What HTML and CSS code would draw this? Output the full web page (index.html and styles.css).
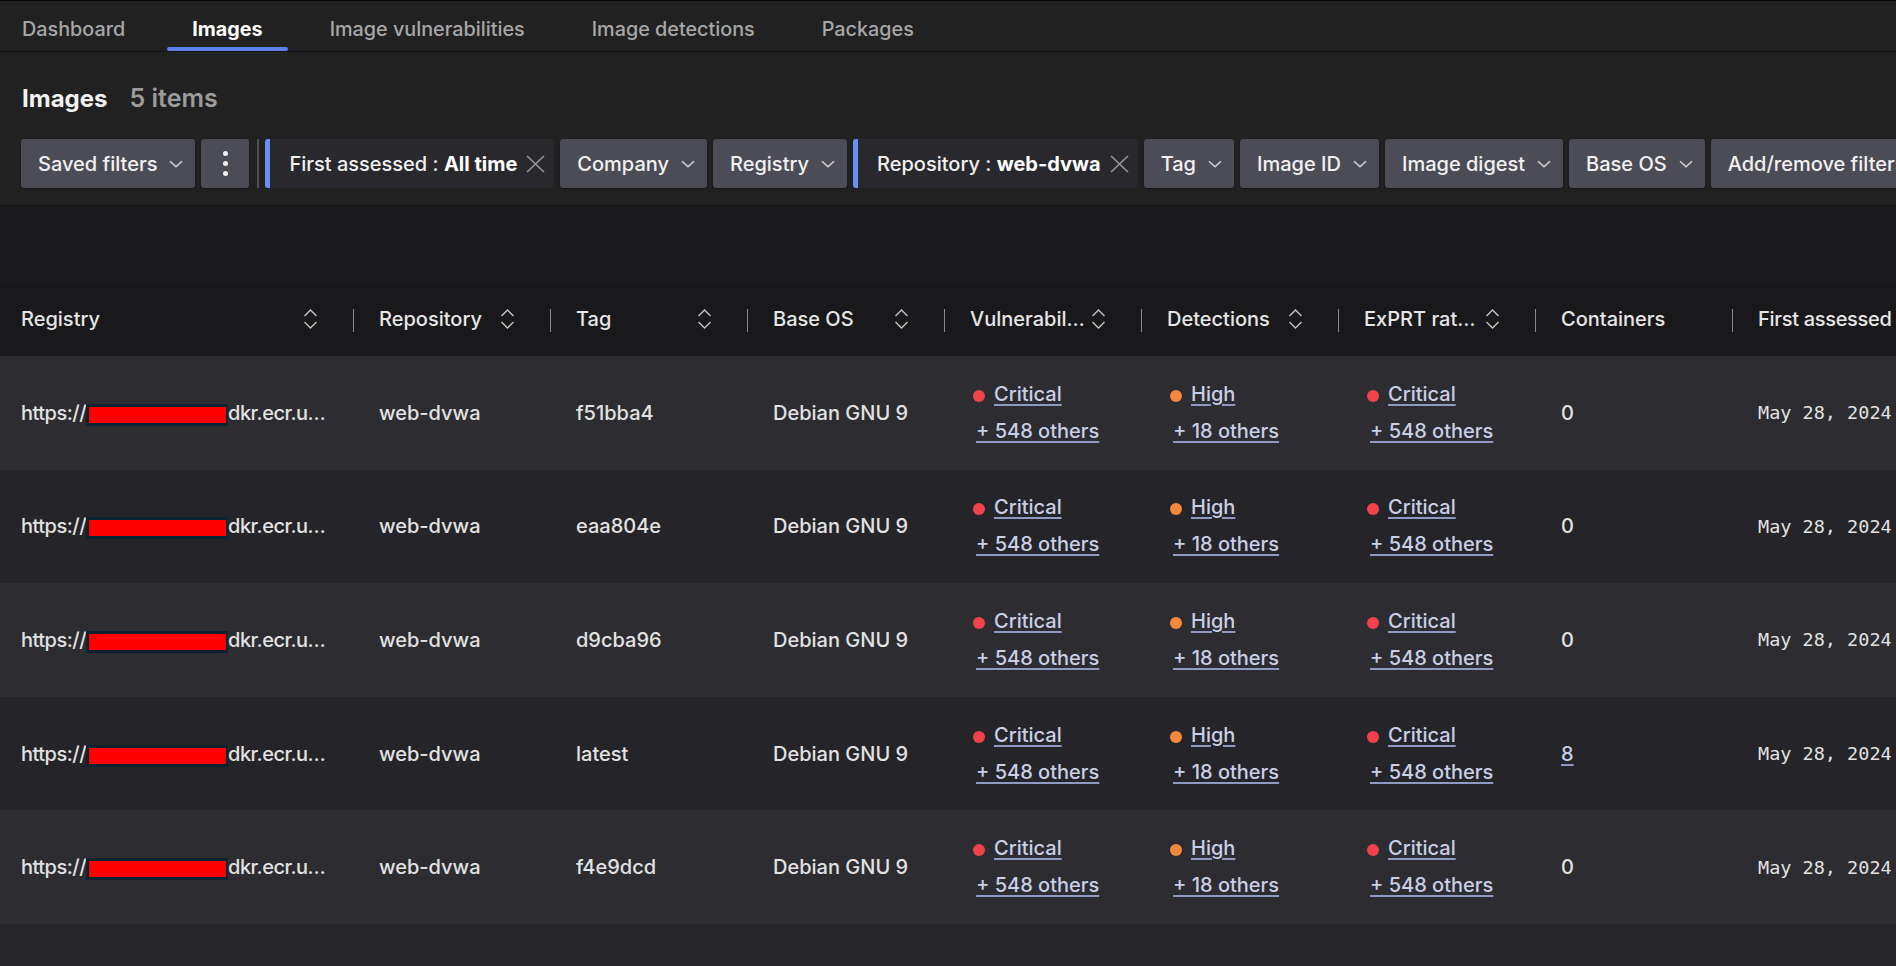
FILE: index.html
```html
<!DOCTYPE html>
<html lang="en">
<head>
<meta charset="utf-8">
<title>Images</title>
<link rel="stylesheet" href="styles.css">
</head>
<body>
<div class="app">
  <nav class="tabs">
    <span class="tab first">Dashboard</span>
    <span class="tab active">Images</span>
    <span class="tab">Image vulnerabilities</span>
    <span class="tab">Image detections</span>
    <span class="tab">Packages</span>
  </nav>

  <header class="page-head">
    <h1 class="title">Images</h1>
    <span class="count">5 items</span>
  </header>

  <div class="filters">
    <button class="btn">Saved filters <svg class="chev" viewBox="0 0 14 8"><path d="M1 1.2 L7 6.8 L13 1.2"/></svg></button>
    <button class="btn kebab"><span></span><span></span><span></span></button>
    <span class="vsep"></span>
    <div class="chip">First assessed :&nbsp; <b>All time</b><svg class="close" viewBox="0 0 19 18"><path d="M1 1 L18 17 M18 1 L1 17"/></svg></div>
    <button class="btn">Company <svg class="chev" viewBox="0 0 14 8"><path d="M1 1.2 L7 6.8 L13 1.2"/></svg></button>
    <button class="btn">Registry <svg class="chev" viewBox="0 0 14 8"><path d="M1 1.2 L7 6.8 L13 1.2"/></svg></button>
    <div class="chip">Repository :&nbsp; <b>web-dvwa</b><svg class="close" viewBox="0 0 19 18"><path d="M1 1 L18 17 M18 1 L1 17"/></svg></div>
    <button class="btn">Tag <svg class="chev" viewBox="0 0 14 8"><path d="M1 1.2 L7 6.8 L13 1.2"/></svg></button>
    <button class="btn">Image ID <svg class="chev" viewBox="0 0 14 8"><path d="M1 1.2 L7 6.8 L13 1.2"/></svg></button>
    <button class="btn">Image digest <svg class="chev" viewBox="0 0 14 8"><path d="M1 1.2 L7 6.8 L13 1.2"/></svg></button>
    <button class="btn">Base OS <svg class="chev" viewBox="0 0 14 8"><path d="M1 1.2 L7 6.8 L13 1.2"/></svg></button>
    <button class="btn">Add/remove filters</button>
  </div>

  <div class="band"></div>

  <div class="table">
    <div class="row head">
      <div class="cell c1"><span class="label">Registry</span><svg class="sort" viewBox="0 0 15 22"><path d="M1.5 8 L7.5 2 L13.5 8 M1.5 14 L7.5 20 L13.5 14"/></svg></div>
      <div class="cell"><span class="label">Repository</span><svg class="sort" viewBox="0 0 15 22"><path d="M1.5 8 L7.5 2 L13.5 8 M1.5 14 L7.5 20 L13.5 14"/></svg></div>
      <div class="cell"><span class="label">Tag</span><svg class="sort" viewBox="0 0 15 22"><path d="M1.5 8 L7.5 2 L13.5 8 M1.5 14 L7.5 20 L13.5 14"/></svg></div>
      <div class="cell"><span class="label">Base OS</span><svg class="sort" viewBox="0 0 15 22"><path d="M1.5 8 L7.5 2 L13.5 8 M1.5 14 L7.5 20 L13.5 14"/></svg></div>
      <div class="cell"><span class="label">Vulnerabilities</span><svg class="sort" viewBox="0 0 15 22"><path d="M1.5 8 L7.5 2 L13.5 8 M1.5 14 L7.5 20 L13.5 14"/></svg></div>
      <div class="cell"><span class="label">Detections</span><svg class="sort" viewBox="0 0 15 22"><path d="M1.5 8 L7.5 2 L13.5 8 M1.5 14 L7.5 20 L13.5 14"/></svg></div>
      <div class="cell"><span class="label">ExPRT rating</span><svg class="sort" viewBox="0 0 15 22"><path d="M1.5 8 L7.5 2 L13.5 8 M1.5 14 L7.5 20 L13.5 14"/></svg></div>
      <div class="cell"><span class="label">Containers</span></div>
      <div class="cell last"><span class="label">First assessed</span></div>
    </div>

    <div class="row odd">
      <div class="cell c1 url">https://<span class="redact"></span>dkr.ecr.u…</div>
      <div class="cell">web-dvwa</div>
      <div class="cell">f51bba4</div>
      <div class="cell">Debian GNU 9</div>
      <div class="cell sev"><div><i class="dot red"></i><a class="link">Critical</a></div><div><a class="link">+ 548 others</a></div></div>
      <div class="cell sev"><div><i class="dot orange"></i><a class="link">High</a></div><div><a class="link">+ 18 others</a></div></div>
      <div class="cell sev"><div><i class="dot red"></i><a class="link">Critical</a></div><div><a class="link">+ 548 others</a></div></div>
      <div class="cell num">0</div>
      <div class="cell last date">May 28, 2024</div>
    </div>

    <div class="row even">
      <div class="cell c1 url">https://<span class="redact"></span>dkr.ecr.u…</div>
      <div class="cell">web-dvwa</div>
      <div class="cell">eaa804e</div>
      <div class="cell">Debian GNU 9</div>
      <div class="cell sev"><div><i class="dot red"></i><a class="link">Critical</a></div><div><a class="link">+ 548 others</a></div></div>
      <div class="cell sev"><div><i class="dot orange"></i><a class="link">High</a></div><div><a class="link">+ 18 others</a></div></div>
      <div class="cell sev"><div><i class="dot red"></i><a class="link">Critical</a></div><div><a class="link">+ 548 others</a></div></div>
      <div class="cell num">0</div>
      <div class="cell last date">May 28, 2024</div>
    </div>

    <div class="row odd">
      <div class="cell c1 url">https://<span class="redact"></span>dkr.ecr.u…</div>
      <div class="cell">web-dvwa</div>
      <div class="cell">d9cba96</div>
      <div class="cell">Debian GNU 9</div>
      <div class="cell sev"><div><i class="dot red"></i><a class="link">Critical</a></div><div><a class="link">+ 548 others</a></div></div>
      <div class="cell sev"><div><i class="dot orange"></i><a class="link">High</a></div><div><a class="link">+ 18 others</a></div></div>
      <div class="cell sev"><div><i class="dot red"></i><a class="link">Critical</a></div><div><a class="link">+ 548 others</a></div></div>
      <div class="cell num">0</div>
      <div class="cell last date">May 28, 2024</div>
    </div>

    <div class="row even">
      <div class="cell c1 url">https://<span class="redact"></span>dkr.ecr.u…</div>
      <div class="cell">web-dvwa</div>
      <div class="cell">latest</div>
      <div class="cell">Debian GNU 9</div>
      <div class="cell sev"><div><i class="dot red"></i><a class="link">Critical</a></div><div><a class="link">+ 548 others</a></div></div>
      <div class="cell sev"><div><i class="dot orange"></i><a class="link">High</a></div><div><a class="link">+ 18 others</a></div></div>
      <div class="cell sev"><div><i class="dot red"></i><a class="link">Critical</a></div><div><a class="link">+ 548 others</a></div></div>
      <div class="cell num"><a class="link">8</a></div>
      <div class="cell last date">May 28, 2024</div>
    </div>

    <div class="row odd">
      <div class="cell c1 url">https://<span class="redact"></span>dkr.ecr.u…</div>
      <div class="cell">web-dvwa</div>
      <div class="cell">f4e9dcd</div>
      <div class="cell">Debian GNU 9</div>
      <div class="cell sev"><div><i class="dot red"></i><a class="link">Critical</a></div><div><a class="link">+ 548 others</a></div></div>
      <div class="cell sev"><div><i class="dot orange"></i><a class="link">High</a></div><div><a class="link">+ 18 others</a></div></div>
      <div class="cell sev"><div><i class="dot red"></i><a class="link">Critical</a></div><div><a class="link">+ 548 others</a></div></div>
      <div class="cell num">0</div>
      <div class="cell last date">May 28, 2024</div>
    </div>
  </div>
</div>
</body>
</html>
```

FILE: styles.css
```css
* { box-sizing: border-box; }

html, body {
  margin: 0;
  padding: 0;
  height: 966px;
  overflow: hidden;
}

body {
  background: #212121;
  color: #e2e2e2;
  font-family: Inter, "Noto Sans", "Liberation Sans", sans-serif;
  font-size: 20px;
}

.app {
  height: 966px;
  display: flex;
  flex-direction: column;
  border-top: 1px solid #050505;
}

/* Tabs */
.tabs {
  display: flex;
  height: 51px;
  padding-left: 22px;
  gap: 17px;
  border-bottom: 1px solid #131313;
  flex-shrink: 0;
}

.tab {
  position: relative;
  padding: 15px 25px 0;
  line-height: 26px;
  font-size: 19.8px;
  color: #a7a7a7;
  font-weight: 500;
  white-space: nowrap;
}

.tab.first { padding-left: 0; }

.tab.active {
  color: #ffffff;
  font-weight: 700;
}

.tab.active::after {
  content: "";
  position: absolute;
  left: 0;
  right: 0;
  bottom: 0;
  height: 4px;
  border-radius: 2px;
  background: #5c7fea;
}

/* Title */
.page-head {
  display: flex;
  align-items: baseline;
  gap: 22px;
  padding: 31px 22px 0;
  height: 61px;
  flex-shrink: 0;
}

.title {
  margin: 0;
  font-size: 24px;
  line-height: 30px;
  font-weight: 700;
  color: #f2f2f2;
}

.count {
  font-size: 25px;
  line-height: 30px;
  font-weight: 600;
  color: #9c9c9c;
}

/* Filters */
.filters {
  display: flex;
  align-items: stretch;
  gap: 6px;
  height: 93px;
  padding: 26px 0 17px 21px;
  border-bottom: 1px solid #131313;
  overflow: hidden;
  white-space: nowrap;
  flex-shrink: 0;
}

.btn {
  display: flex;
  align-items: center;
  gap: 12px;
  flex-shrink: 0;
  height: 49px;
  padding: 0 12px 0 17px;
  border: 0;
  border-radius: 3px;
  background: #4c4c56;
  color: #f1f1f1;
  font-family: inherit;
  font-size: 20px;
  font-weight: 500;
  box-shadow: 0 1px 2px rgba(0, 0, 0, 0.35);
}

.chev {
  width: 14px;
  height: 8px;
  fill: none;
  stroke: #d4d4d4;
  stroke-width: 1.5;
}

.kebab {
  width: 48px;
  padding: 0;
  flex-direction: column;
  justify-content: center;
  gap: 5px;
}

.kebab span {
  width: 5px;
  height: 5px;
  border-radius: 50%;
  background: #f0f0f0;
}

.vsep {
  width: 2px;
  margin-left: 2px;
  background: #4e4e52;
  flex-shrink: 0;
}

.chip {
  display: flex;
  align-items: center;
  flex-shrink: 0;
  height: 49px;
  padding: 0 9px 0 19px;
  border-left: 5px solid #6d8ff5;
  border-radius: 3px;
  background: #29292d;
  color: #f1f1f1;
  font-weight: 500;
}

.chip b {
  font-weight: 700;
  color: #ffffff;
}

.close {
  width: 19px;
  height: 18px;
  margin-left: 9px;
  fill: none;
  stroke: #9a9a9a;
  stroke-width: 1.6;
}

.band {
  height: 76px;
  background: #1b1b1d;
  flex-shrink: 0;
}

/* Table */
.table {
  flex: 1;
  background: #26262a;
}

.row {
  display: grid;
  grid-template-columns: 353px repeat(7, 197px) 200px;
  height: 113.6px;
}

.row.head {
  height: 74px;
  background: #19191c;
  color: #e6e6e6;
}

.row.odd { background: #2c2c31; }
.row.even { background: #252529; }

.cell {
  position: relative;
  display: flex;
  align-items: center;
  min-width: 0;
  padding: 0 35px 0 26px;
  font-weight: 500;
  white-space: nowrap;
}

.cell.c1 { padding-left: 21px; }
.cell.last { padding-right: 0; }

.cell.url { letter-spacing: -0.5px; }

.head .cell + .cell::before {
  content: "";
  position: absolute;
  left: 0;
  top: 27px;
  width: 1px;
  height: 23px;
  background: #8a8a8c;
}

.head .label {
  flex: 0 1 auto;
  min-width: 0;
  overflow: hidden;
  text-overflow: ellipsis;
  margin-right: 6px;
}

.head .last .label {
  flex-shrink: 0;
  overflow: visible;
  letter-spacing: -0.3px;
}

.sort {
  flex-shrink: 0;
  width: 15px;
  height: 22px;
  margin-left: auto;
  fill: none;
  stroke: #c4c4c4;
  stroke-width: 1.4;
}

.redact {
  display: inline-block;
  flex-shrink: 0;
  width: 142px;
  height: 22px;
  margin-top: 4px;
  border: 3px solid #0d2332;
  border-right-width: 2px;
  background: #ff0000;
}

.sev {
  flex-direction: column;
  align-items: flex-start;
  justify-content: center;
  padding-left: 29px;
  line-height: 37px;
}

.sev > div {
  display: flex;
  align-items: center;
}

.link {
  color: #c9cfe7;
  text-decoration: underline;
  text-decoration-color: #8f9ac2;
  text-decoration-thickness: 1.5px;
  text-underline-offset: 3px;
}

.sev > div:last-child .link { margin-left: 3px; }

.dot {
  display: inline-block;
  width: 12px;
  height: 12px;
  margin-right: 9px;
  margin-top: 3px;
  border-radius: 50%;
}

.dot.red { background: #f0434b; }
.dot.orange { background: #f5883c; }

.num { font-weight: 500; }

.date {
  font-family: "DejaVu Sans Mono", "Liberation Mono", monospace;
  font-size: 18.5px;
  font-weight: 400;
  color: #e2e2e2;
}
```
